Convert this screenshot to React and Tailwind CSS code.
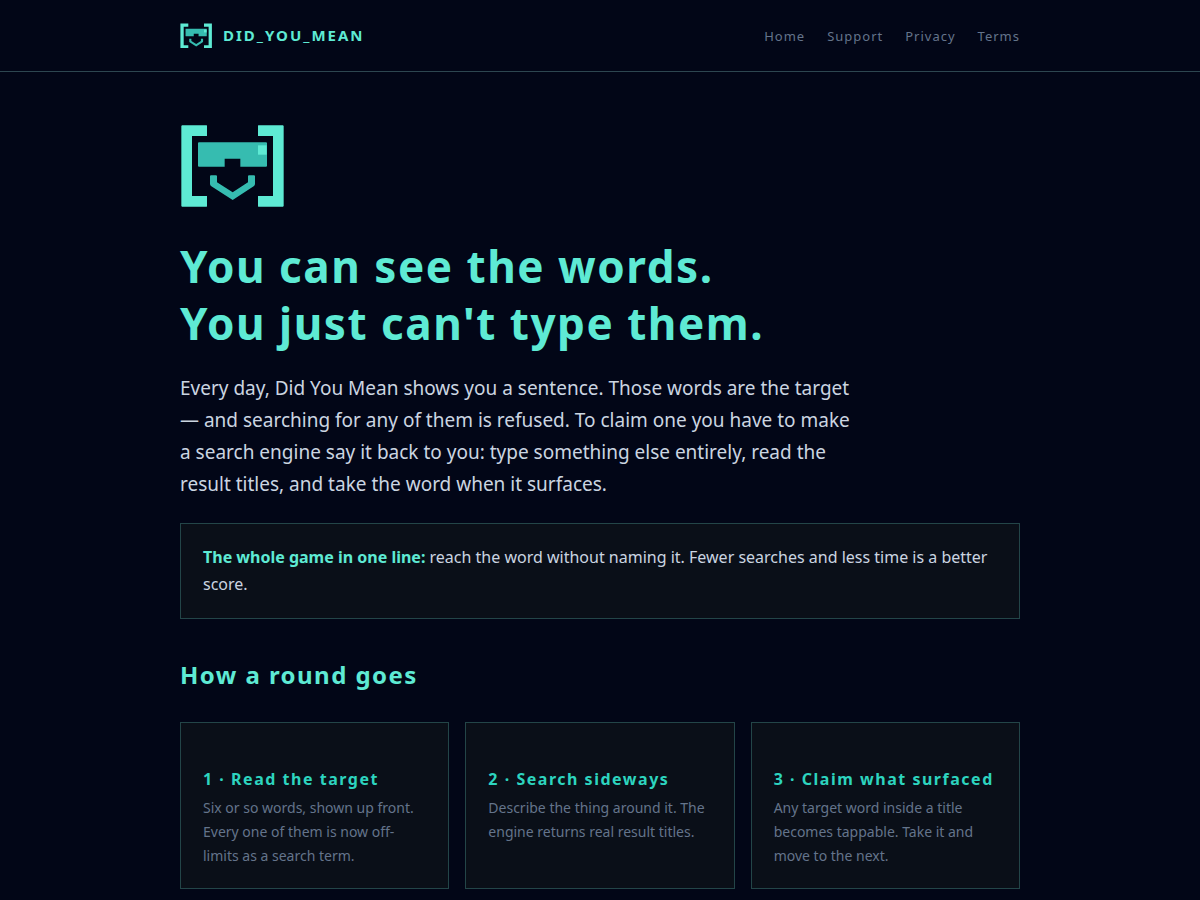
const navLinks = [
    { label: "Home", href: "#home" },
    { label: "Support", href: "#support" },
    { label: "Privacy", href: "#privacy" },
    { label: "Terms", href: "#terms" },
];

const steps = [
    {
        title: "1 · Read the target",
        text: "Six or so words, shown up front. Every one of them is now off-limits as a search term.",
    },
    {
        title: "2 · Search sideways",
        text: "Describe the thing around it. The engine returns real result titles.",
    },
    {
        title: "3 · Claim what surfaced",
        text: "Any target word inside a title becomes tappable. Take it and move to the next.",
    },
];

function Logo({ className }) {
    return (
        <svg viewBox="0 0 312 252" className={className} aria-hidden="true">
            {/* brackets */}
            <path fill="#5eead4" d="M6 4H80L81 5V36H36V216H81V247L80 248H6L4 246V6Z" />
            <path fill="#5eead4" d="M309 4H235L234 5V36H279V216H234V247L235 248H309L311 246V6Z" />
            {/* visor */}
            <path fill="#36bcb0" d="M56 55H259L261 57V126L259 128H181V104H134V128H56L54 126V57Z" />
            <path fill="#5eead4" d="M234 64H260V92H234Z" />
            {/* mouth */}
            <path fill="#36bcb0" d="M92 154H109L111 156V175L158 205L204 175V156L206 154H223L225 156V180Q225 184 221 187L158 228L94 187Q90 184 90 180V156Z" />
        </svg>
    );
}

function App() {
    return (
        <div className="min-h-screen bg-[#020617] font-['Noto_Sans',sans-serif] text-base leading-[27px] text-[#cbd5e1]">
            <header className="border-b border-[#2d4650]">
                <div className="mx-auto flex max-w-[888px] items-center justify-between px-6 py-[22px]">
                    <a href="#home" className="flex items-center gap-[11px] text-[15px] font-bold tracking-[2px] text-[#5eead4]">
                        <Logo className="w-8" />
                        DID_YOU_MEAN
                    </a>
                    <nav>
                        <ul className="flex gap-[22px] leading-[26px] tracking-[1px] text-[#64748b]">
                            {navLinks.map((link) => (
                                <li key={link.label}>
                                    <a href={link.href} className="text-[13px] hover:text-[#5eead4]">{link.label}</a>
                                </li>
                            ))}
                        </ul>
                    </nav>
                </div>
            </header>

            <main className="mx-auto max-w-[888px] px-6 pt-[52px] pb-16">
                <Logo className="w-26" />

                <h1 className="mt-[30px] text-[44px] leading-[57px] font-bold tracking-[0.035em] text-[#5eead4]">
                    You can see the words.
                    <br />
                    You just can't type them.
                </h1>

                <p className="mt-5 max-w-[680px] text-[19px] leading-8">
                    Every day, Did You Mean shows you a sentence. Those words are the target — and searching
                    for any of them is refused. To claim one you have to make a search engine say it back to
                    you: type something else entirely, read the result titles, and take the word when it
                    surfaces.
                </p>

                <p className="mt-[23px] border border-[#234548] bg-[#0a0f18] px-[22px] py-5">
                    <strong className="font-bold text-[#5eead4]">The whole game in one line:</strong> reach the
                    word without naming it. Fewer searches and less time is a better score.
                </p>

                <h2 className="mt-10 text-2xl leading-8 font-bold tracking-[0.06em] text-[#5eead4]">How a round goes</h2>

                <div className="mt-[31px] grid gap-4 sm:grid-cols-3">
                    {steps.map((step) => (
                        <section key={step.title} className="border border-[#234548] bg-[#0a0f18] px-[22px] pt-11 pb-5">
                            <h3 className="leading-6 font-bold tracking-[0.095em] text-[#2dd4bf]">{step.title}</h3>
                            <p className="mt-[5px] text-sm leading-6 text-[#64748b]">{step.text}</p>
                        </section>
                    ))}
                </div>
            </main>
        </div>
    );
}

export default App;
